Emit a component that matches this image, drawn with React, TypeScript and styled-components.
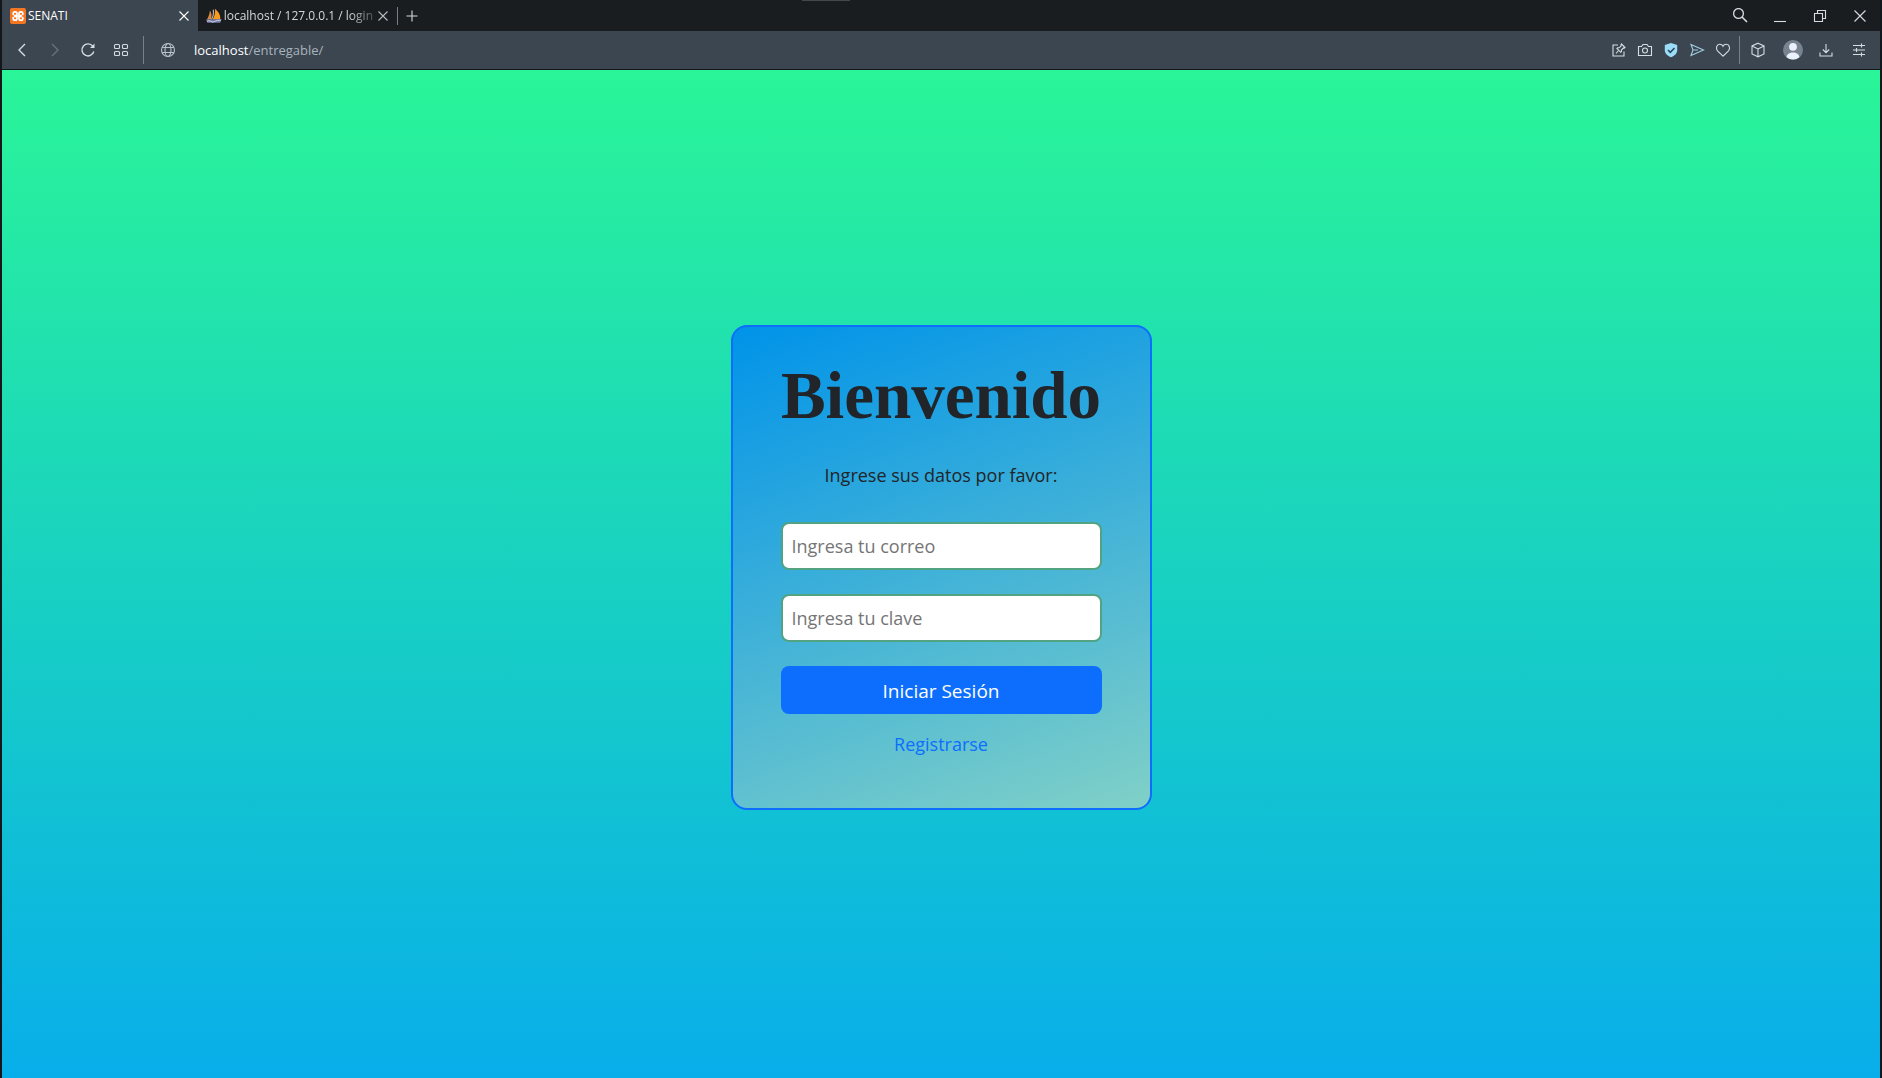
import React from 'react';
import styled, { createGlobalStyle } from 'styled-components';

const Global = createGlobalStyle`
  *, *::before, *::after { box-sizing: border-box; }
  html, body, #root { height: 100%; }
  body {
    margin: 0;
    font-family: "Open Sans", "Noto Sans", sans-serif;
    color: #212529;
  }
`;

const Window = styled.div`
  display: flex;
  flex-direction: column;
  min-height: 100%;
  padding: 0 2px;
  background: #12171b;
`;

const TabStrip = styled.header`
  display: flex;
  align-items: stretch;
  height: 31px;
  background: #191d20;
  position: relative;
`;

const Grip = styled.span`
  position: absolute;
  top: 0;
  left: 50%;
  width: 48px;
  height: 1px;
  margin-left: -139px;
  background: #45474a;
`;

const Tab = styled.div<{ $active?: boolean }>`
  display: flex;
  align-items: center;
  gap: 2px;
  width: ${(p) => (p.$active ? 196 : 199)}px;
  padding: 0 6px 0 8px;
  font-size: 12px;
  line-height: 16px;
  color: ${(p) => (p.$active ? '#ffffff' : '#d3d7da')};
  background: ${(p) => (p.$active ? '#3b4651' : 'transparent')};
`;

const TabTitle = styled.span<{ $fade?: boolean }>`
  flex: 1;
  white-space: nowrap;
  mask-image: ${(p) => (p.$fade ? 'linear-gradient(90deg, #000 84%, rgba(0, 0, 0, 0.3))' : 'none')};
`;

const IconButton = styled.button<{ $width: number; $color?: string }>`
  display: flex;
  align-items: center;
  justify-content: center;
  flex: none;
  width: ${(p) => p.$width}px;
  padding: 0;
  border: 0;
  background: none;
  color: ${(p) => p.$color ?? '#d5dce2'};
`;

const Divider = styled.span<{ $height: number; $gap?: number }>`
  flex: none;
  align-self: center;
  width: 1px;
  height: ${(p) => p.$height}px;
  margin-left: ${(p) => p.$gap ?? 0}px;
  background: #77818a;
`;

const Group = styled.div<{ $end?: boolean }>`
  display: flex;
  margin-left: ${(p) => (p.$end ? 'auto' : '0')};
`;

const Toolbar = styled.nav`
  display: flex;
  align-items: center;
  height: 39px;
  padding: 0 5px 0 3px;
  background: #3b4651;
  border-bottom: 1px solid #12171b;
`;

const Address = styled.div`
  margin-left: 2px;
  font-size: 13px;
  line-height: 18px;
  color: #a9b3bc;
`;

const Host = styled.span`
  color: #ffffff;
`;

const Page = styled.main`
  flex: 1;
  display: flex;
  align-items: center;
  justify-content: center;
  padding: 24px;
  background: linear-gradient(0deg, #08aeea 0%, #2af598 100%);
`;

const Card = styled.form`
  display: flex;
  flex-direction: column;
  width: 421px;
  margin-bottom: 14px;
  padding: 32px 48px 50px;
  border: 2px solid #0d6efd;
  border-radius: 16px;
  background: linear-gradient(160deg, #0093e9 0%, #80d0c7 100%);
  text-align: center;
  font-size: 18px;
  line-height: 28px;
`;

const Title = styled.h1`
  margin: 0;
  font-family: "Liberation Serif", serif;
  font-weight: 700;
  font-size: 67px;
  line-height: 72px;
`;

const Lead = styled.p`
  margin: 30px 0 33px;
`;

const Field = styled.input`
  width: 100%;
  height: 48px;
  margin-bottom: 24px;
  padding: 0 9px;
  border: 2px solid #52a382;
  border-radius: 8px;
  background: #ffffff;
  font: inherit;
  color: #212529;
  &::placeholder { color: #757575; opacity: 1; }
`;

const Submit = styled.button`
  height: 48px;
  margin-bottom: 16px;
  padding: 2px 0 0;
  border: 0;
  border-radius: 8px;
  background: #0d6efd;
  color: #ffffff;
  font: inherit;
  font-size: 19px;
`;

const Register = styled.a`
  align-self: center;
  color: #0d6efd;
  text-decoration: none;
`;

type IconProps = { size?: number; children: React.ReactNode };
const Icon = ({ size = 16, children }: IconProps) => (
  <svg width={size} height={size} viewBox="0 0 16 16" fill="none" stroke="currentColor" strokeWidth="1.1" aria-hidden="true">
    {children}
  </svg>
);

const CloseIcon = ({ size = 16 }: { size?: number }) => (
  <Icon size={size}><path d="M3.5 3.5l9 9M12.500 3.500l-9 9" /></Icon>
);

export default function App() {
  return (
    <>
      <Global />
      <Window>
        <TabStrip>
          <Grip />
          <Tab $active>
            <Icon>
              <rect x="0" y="0" width="16" height="16" rx="2" fill="#f37623" stroke="none" />
              <rect x="3.200" y="3.900" width="3.800" height="3.800" rx="1.700" stroke="#fff" strokeWidth="1.700" />
              <rect x="3.200" y="8.300" width="3.800" height="3.800" rx="1.700" stroke="#fff" strokeWidth="1.700" />
              <rect x="9" y="3.900" width="3.800" height="3.800" rx="1.700" stroke="#fff" strokeWidth="1.700" />
              <rect x="9" y="8.300" width="3.800" height="3.800" rx="1.700" stroke="#fff" strokeWidth="1.700" />
              <path d="M6.500 8h3" stroke="#fff" strokeWidth="1.700" />
              <path d="M1.800 8h2.400M11.800 8h2.400" stroke="#f37623" strokeWidth="1.400" />
            </Icon>
            <TabTitle>SENATI</TabTitle>
            <IconButton $width={16} $color="#ffffff" type="button" aria-label="Cerrar pestaña"><CloseIcon /></IconButton>
          </Tab>
          <Tab>
            <Icon>
              <path d="M1 11.500C3 8.500 3.800 5 4 2.500C6 5 6 8.500 5 11.500Z" fill="#d98a3c" stroke="none" />
              <path d="M6.500 11.500C9 8 9.500 4 9.200 0.500C14 4.500 15 8.500 14.500 11.500Z" fill="#f79a1e" stroke="none" />
              <path d="M5.500 11.500C7.500 8.500 8 5 7.400 1.500" stroke="#b9bdd6" />
              <path d="M0 11.500L16 11L14.500 15L1.500 15Z" fill="#757ca5" stroke="none" />
              <path d="M1 13.500Q3 12 5 13.500T9 13.500T15 12.500" stroke="#d8dae7" strokeWidth="0.900" />
            </Icon>
            <TabTitle $fade>localhost / 127.0.0.1 / login</TabTitle>
            <IconButton $width={16} $color="#b5babe" type="button" aria-label="Cerrar pestaña"><CloseIcon /></IconButton>
          </Tab>
          <Divider $height={18} />
          <IconButton $width={28} type="button" aria-label="Nueva pestaña">
            <Icon><path d="M8 2.500v11M2.500 8h11" /></Icon>
          </IconButton>
          <Group $end>
            <IconButton $width={40} type="button" aria-label="Buscar">
              <Icon><circle cx="6.500" cy="5.500" r="4.900" strokeWidth="1.300" /><path d="M10 9l5 5" strokeWidth="1.600" /></Icon>
            </IconButton>
            <IconButton $width={40} type="button" aria-label="Minimizar">
              <Icon><path d="M2 13.500h12" /></Icon>
            </IconButton>
            <IconButton $width={40} type="button" aria-label="Restaurar">
              <Icon><path d="M2.500 5.500h8v8h-8zM5.500 5.500v-3h8v8h-3" /></Icon>
            </IconButton>
            <IconButton $width={40} type="button" aria-label="Cerrar">
              <Icon><path d="M2.500 2.500l11 11M13.500 2.500l-11 11" /></Icon>
            </IconButton>
          </Group>
        </TabStrip>

        <Toolbar>
          <IconButton $width={33} type="button" aria-label="Atrás">
            <Icon><path d="M11 2L5 8l6 6" strokeWidth="1.400" /></Icon>
          </IconButton>
          <IconButton $width={33} $color="#66717b" type="button" aria-label="Adelante">
            <Icon><path d="M5 2l6 6-6 6" strokeWidth="1.400" /></Icon>
          </IconButton>
          <IconButton $width={33} type="button" aria-label="Recargar">
            <Icon><path d="M13.800 9.500A6 6 0 1 1 12.800 4.300" strokeWidth="1.400" /><path d="M14.500 1.500v4.500h-4.500z" fill="currentColor" stroke="none" /></Icon>
          </IconButton>
          <IconButton $width={33} type="button" aria-label="Inicio rápido">
            <Icon>
              <rect x="1.500" y="2.500" width="5" height="4" rx="1" /><rect x="9.500" y="2.500" width="5" height="4" rx="1" />
              <rect x="1.500" y="9.500" width="5" height="4" rx="1" /><rect x="9.500" y="9.500" width="5" height="4" rx="1" />
            </Icon>
          </IconButton>
          <Divider $height={28} $gap={6} />
          <IconButton $width={48} $color="#b7c2cb" type="button" aria-label="Información del sitio">
            <Icon>
              <circle cx="8" cy="8" r="6.500" /><ellipse cx="8" cy="8" rx="3" ry="6.500" />
              <path d="M2.200 5.500h11.600M2.200 10.500h11.600" />
            </Icon>
          </IconButton>
          <Address><Host>localhost</Host>/entregable/</Address>

          <Group $end>
            <IconButton $width={26} type="button" aria-label="Fijar">
              <Icon>
                <path d="M7 3H2v11h11V9.500M5 11.500l2.500-3" />
                <path d="M10.500 2l3.500 3.500-1 .800-.600-.300-2 2 .100 1.500-.800.800-3.800-3.800.800-.800 1.500.100 2-2-.300-.800z" />
              </Icon>
            </IconButton>
            <IconButton $width={26} type="button" aria-label="Captura">
              <Icon><path d="M1.500 4.500h3l1.500-2h4l1.500 2h3v9h-13z" /><circle cx="8" cy="8.500" r="2.500" /></Icon>
            </IconButton>
            <IconButton $width={26} $color="#9bdcf8" type="button" aria-label="Protección">
              <Icon>
                <path d="M8 1l6.200 2v5.500c0 3-2.700 5.300-6.200 6.700-3.500-1.400-6.200-3.700-6.200-6.700V3z" fill="currentColor" stroke="none" />
                <path d="M5 8l2.300 2.300L11.500 6" stroke="#28485a" strokeWidth="1.600" />
              </Icon>
            </IconButton>
            <IconButton $width={26} $color="#a3cfe2" type="button" aria-label="Enviar">
              <Icon><path d="M2 2.500L14.500 8 2 13.500 4 8zM4 8h5" /></Icon>
            </IconButton>
            <IconButton $width={26} type="button" aria-label="Favoritos">
              <Icon><path d="M8 14.200L2.500 8.800C.500 6.500 1.500 2.500 4.700 2.300 6.500 2.200 7.500 3.300 8 4.300c.500-1 1.500-2.100 3.300-2 3.200.200 4.200 4.200 2.200 6.500z" /></Icon>
            </IconButton>
          </Group>
          <Divider $height={28} $gap={3} />
          <Group>
            <IconButton $width={36} type="button" aria-label="Extensiones">
              <Icon><path d="M8 1.200l6 2.700v8L8 14.800 2 11.900v-8zM2 3.900l6 3 6-3M8 6.900v7.900" /></Icon>
            </IconButton>
            <IconButton $width={33} type="button" aria-label="Perfil">
              <svg width="20" height="20" viewBox="0 0 20 20" aria-hidden="true">
                <circle cx="10" cy="10" r="10" fill="#77838f" />
                <circle cx="10" cy="6.800" r="3.900" fill="#eaf1fb" />
                <path d="M3.600 17.200c0-6.400 12.800-6.400 12.800 0a9.800 9.800 0 0 1-12.800 0z" fill="#eaf1fb" />
              </svg>
            </IconButton>
            <IconButton $width={33} type="button" aria-label="Descargas">
              <Icon><path d="M8 2v8.500M4.800 7.500L8 10.700l3.200-3.200M2 10.500v3.500h12v-3.500" /></Icon>
            </IconButton>
            <IconButton $width={33} type="button" aria-label="Configuración">
              <Icon><path d="M2 3.500h12M2 8h12M2 12.500h12M10.500 1.500v4M5.500 6v4M10.500 10.500v4" /></Icon>
            </IconButton>
          </Group>
        </Toolbar>

        <Page>
          <Card onSubmit={(e) => e.preventDefault()}>
            <Title>Bienvenido</Title>
            <Lead>Ingrese sus datos por favor:</Lead>
            <Field type="email" aria-label="Correo" placeholder="Ingresa tu correo" />
            <Field type="password" aria-label="Clave" placeholder="Ingresa tu clave" />
            <Submit type="submit">Iniciar Sesión</Submit>
            <Register href="#registro">Registrarse</Register>
          </Card>
        </Page>
      </Window>
    </>
  );
}
